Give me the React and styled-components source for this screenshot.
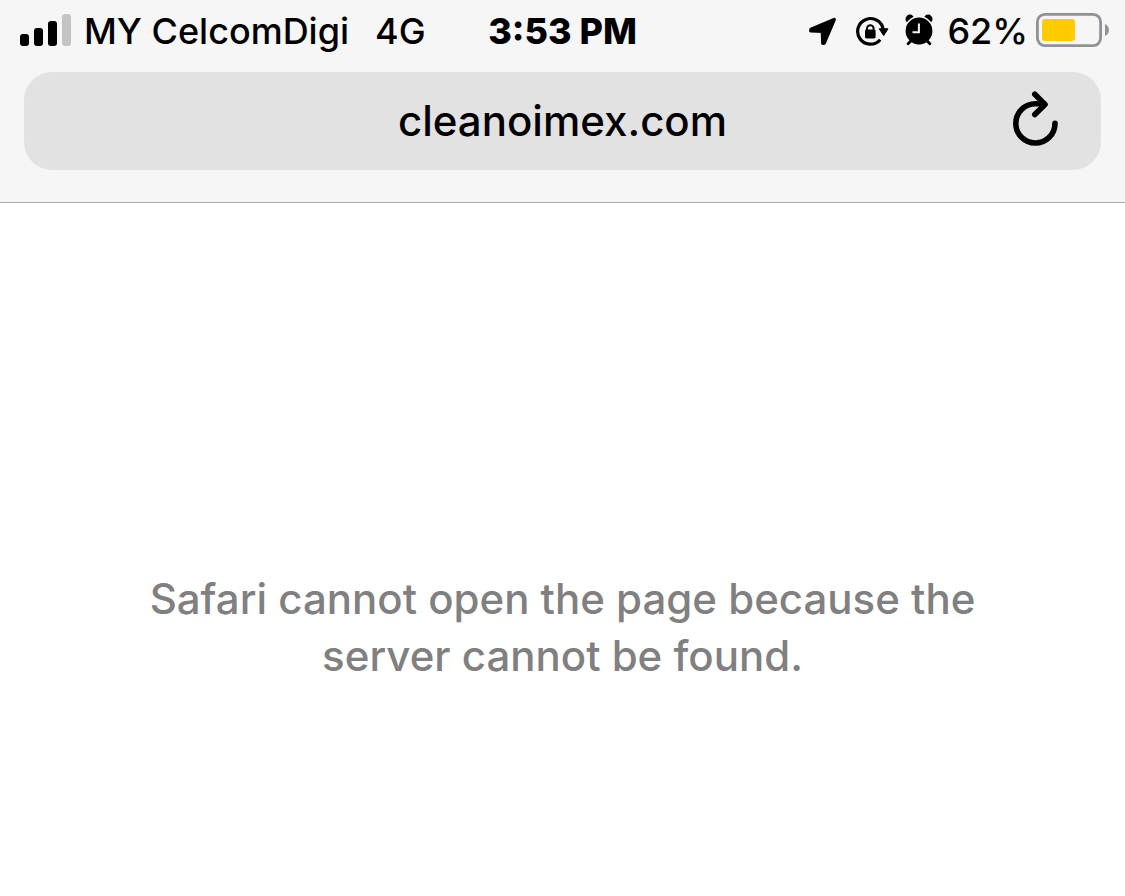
import React, { useState } from 'react';
import styled, { createGlobalStyle } from 'styled-components';

const GlobalStyle = createGlobalStyle`
  * {
    box-sizing: border-box;
  }

  body {
    margin: 0;
    background-color: #fff;
    font-family: Inter, 'Liberation Sans', sans-serif;
  }
`;

const Header = styled.header`
  background-color: #f6f6f6;
  border-bottom: 1px solid #a9a9ab;
`;

const StatusBar = styled.div`
  display: grid;
  grid-template-columns: 1fr auto 1fr;
  align-items: center;
  height: 62px;
  padding: 0 16px;
  color: #000;
`;

const StatusGroup = styled.div`
  display: flex;
  align-items: center;
  justify-content: ${({ $end }) => ($end ? 'flex-end' : 'flex-start')};
  gap: ${({ $gap }) => $gap}px;

  svg {
    display: block;
    flex-shrink: 0;
  }
`;

const StatusText = styled.span`
  font-size: 36px;
  line-height: 44px;
  font-weight: ${({ $bold }) => ($bold ? 800 : 500)};
  white-space: nowrap;
`;

const AddressForm = styled.form`
  display: grid;
  grid-template-columns: 100px 1fr 100px;
  align-items: center;
  height: 98px;
  margin: 10px 24px 32px;
  border-radius: 28px;
  background-color: #e2e2e2;
`;

const AddressInput = styled.input`
  grid-column: 2;
  min-width: 0;
  width: 100%;
  padding: 0;
  border: none;
  outline: none;
  background: transparent;
  color: #000;
  font-family: inherit;
  font-size: 42px;
  line-height: 56px;
  font-weight: 550;
  text-align: center;
`;

const ReloadButton = styled.button`
  justify-self: center;
  padding: 0;
  margin-right: 30px;
  border: none;
  background: none;
  color: #000;
  cursor: pointer;

  svg {
    display: block;
  }
`;

const Content = styled.main`
  display: flex;
  justify-content: center;
  padding: 367px 32px 32px;
`;

const Message = styled.p`
  max-width: 860px;
  margin: 0;
  color: #808080;
  font-size: 42px;
  line-height: 57px;
  font-weight: 550;
  text-align: center;
`;

const SignalIcon = () => (
  <svg width="55" height="34" viewBox="16 14 55 34" aria-hidden="true">
    <rect x="20" y="34" width="9" height="12" rx="3" />
    <rect x="34" y="28" width="9" height="18" rx="3" />
    <rect x="48" y="21" width="9" height="25" rx="3" />
    <rect x="62" y="14" width="9" height="32" rx="3" fill="#c4c4c4" />
  </svg>
);

const LocationIcon = () => (
  <svg width="31" height="30" viewBox="810 16 31 30" aria-hidden="true">
    <path
      d="M812 29.4 L835.2 19.6 L825.2 43 L823.8 43.2 L823.4 31.4 L811.8 30.8 Z"
      stroke="#000"
      strokeWidth="3.4"
      strokeLinejoin="round"
    />
  </svg>
);

const RotationLockIcon = () => (
  <svg width="33" height="30" viewBox="857 16 33 30" aria-hidden="true">
    <path
      d="M884.2 30 A12.8 12.8 0 1 0 881.2 39.7"
      fill="none"
      stroke="#000"
      strokeWidth="3.2"
    />
    <path d="M880.2 28.8 H889 L884.7 35.6 Z" stroke="#000" strokeLinejoin="round" />
    <rect x="866" y="29.5" width="10.6" height="9" rx="1.4" />
    <path d="M868 30.5 V28.6 A3.3 3.3 0 0 1 874.6 28.6 V30.5" fill="none" stroke="#000" strokeWidth="1.9" />
  </svg>
);

const AlarmIcon = () => (
  <svg width="28" height="34" viewBox="905.5 14 28 34" aria-hidden="true">
    <circle cx="910.4" cy="19" r="4.4" />
    <circle cx="928.6" cy="19" r="4.4" />
    <circle cx="919.5" cy="31" r="15" fill="#f6f6f6" />
    <path
      d="M911.8 40.5 L908.6 43.8 M927.2 40.5 L930.4 43.8"
      stroke="#000"
      strokeWidth="2.8"
      strokeLinecap="round"
    />
    <circle cx="919.5" cy="31" r="13.4" />
    <path d="M919.4 23.6 V32.3 H913" fill="none" stroke="#f6f6f6" strokeWidth="2" />
  </svg>
);

const BatteryIcon = () => (
  <svg width="73" height="36" viewBox="1036 13 73 36" aria-hidden="true">
    <rect x="1037.4" y="14.4" width="63.2" height="31.2" rx="7.5" fill="none" stroke="#929294" strokeWidth="2.8" />
    <rect x="1042" y="19" width="33" height="22" rx="3" fill="#ffcc00" />
    <path d="M1105 24 C1110.2 25.8 1110.2 34.2 1105 36 Z" fill="#929294" />
  </svg>
);

const ReloadIcon = () => (
  <svg width="48" height="60" viewBox="1012 91 48 60" aria-hidden="true">
    <g fill="none" stroke="#000" strokeWidth="5.6" strokeLinecap="round" strokeLinejoin="round">
      <path d="M1055 123.4 A19.6 19.6 0 1 1 1035.4 103.8 H1044" />
      <path d="M1034.8 94.3 L1045 104.4 L1034.8 114.6" />
    </g>
  </svg>
);

const App = () => {
  const [address, setAddress] = useState('cleanoimex.com');

  const handleAddressChange = e => {
    setAddress(e.target.value);
  };

  const handleSubmit = e => {
    e.preventDefault();
  };

  return (
    <>
      <GlobalStyle />
      <Header>
        <StatusBar>
          <StatusGroup $gap={13}>
            <SignalIcon />
            <StatusGroup $gap={26}>
              <StatusText>MY CelcomDigi</StatusText>
              <StatusText>4G</StatusText>
            </StatusGroup>
          </StatusGroup>
          <StatusText $bold>3:53 PM</StatusText>
          <StatusGroup $end $gap={14}>
            <StatusGroup $gap={16}>
              <LocationIcon />
              <RotationLockIcon />
              <AlarmIcon />
            </StatusGroup>
            <StatusGroup $gap={8}>
              <StatusText>62%</StatusText>
              <BatteryIcon />
            </StatusGroup>
          </StatusGroup>
        </StatusBar>
        <AddressForm onSubmit={handleSubmit}>
          <AddressInput
            type="text"
            aria-label="Address"
            value={address}
            onChange={handleAddressChange}
          />
          <ReloadButton type="submit" aria-label="Reload">
            <ReloadIcon />
          </ReloadButton>
        </AddressForm>
      </Header>
      <Content>
        <Message>Safari cannot open the page because the server cannot be found.</Message>
      </Content>
    </>
  );
};

export default App;
